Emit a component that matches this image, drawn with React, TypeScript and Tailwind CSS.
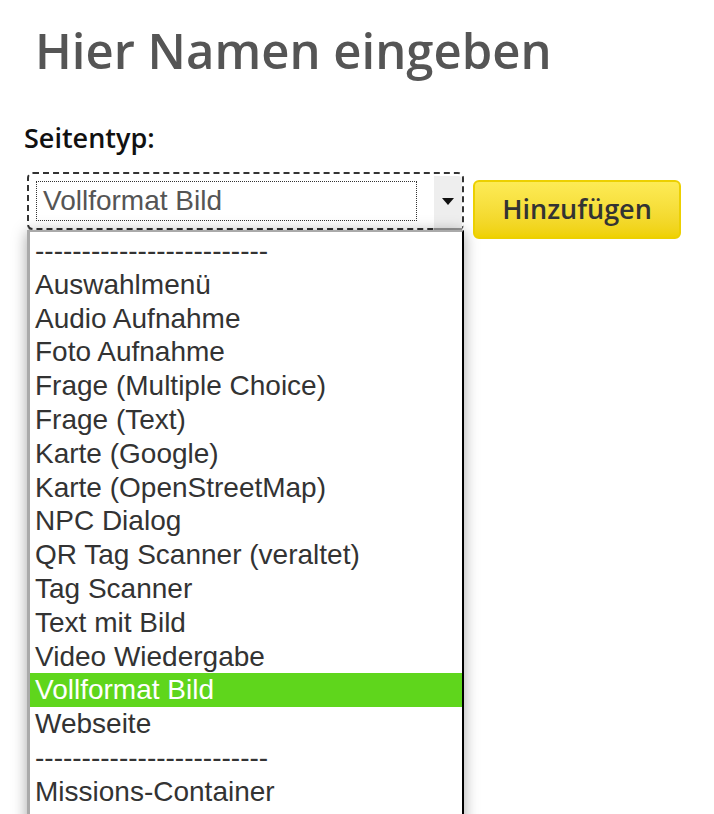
import React from 'react';

const options = [
  '-------------------------',
  'Auswahlmenü',
  'Audio Aufnahme',
  'Foto Aufnahme',
  'Frage (Multiple Choice)',
  'Frage (Text)',
  'Karte (Google)',
  'Karte (OpenStreetMap)',
  'NPC Dialog',
  'QR Tag Scanner (veraltet)',
  'Tag Scanner',
  'Text mit Bild',
  'Video Wiedergabe',
  'Vollformat Bild',
  'Webseite',
  '-------------------------',
  'Missions-Container',
];

const selected = 'Vollformat Bild';

export default function App() {
  return (
    <div className="h-[814px] w-[714px] overflow-hidden bg-white pl-[24px]">
      <h1 className="ml-[11px] pt-[26px] text-[49px] font-semibold leading-none text-[#555555] [font-family:'Open_Sans',sans-serif]">
        Hier Namen eingeben
      </h1>

      <div className="mt-[49px] text-[27px] font-semibold leading-none text-[#111111] [font-family:'Open_Sans',sans-serif]">
        Seitentyp:
      </div>

      <div className="mt-[21px] flex items-start">
        {/* Select box + open list */}
        <div className="ml-[3px] flex w-[437px] flex-col">
          <div className="flex h-[58px] rounded-[6px] border-2 border-dashed border-[#333333] bg-white p-[7px] pr-0 shadow-[0_1px_0_#999]">
            <div className="flex h-[40px] w-[381px] items-center border border-dotted border-[#333333] pl-[6px] text-[28px] leading-none text-[#555555] [font-family:'Liberation_Sans',Arial,sans-serif]">
              Vollformat Bild
            </div>
            <div className="-mt-[5px] ml-auto flex h-[54px] w-[28px] items-center justify-center rounded-tr-[4px] border-b-2 border-[#999999] bg-[#eeeeee]">
              <svg width="12" height="8" viewBox="0 0 12 8">
                <path d="M0 0 H12 L6 7 Z" fill="#111" />
              </svg>
            </div>
          </div>

          <ul className="h-[600px] border-t-2 border-r-2 border-l-[3px] border-t-[#aaaaaa] border-r-black border-l-[#aaaaaa] bg-white pt-[2px] shadow-[0_2px_14px_rgba(0,0,0,0.35)] [font-family:'Liberation_Sans',Arial,sans-serif]">
            {options.map((opt, i) => (
              <li
                key={i}
                className={
                  opt === selected
                    ? 'h-[33.8px] bg-[#5fd61c] pl-[5px] text-[28px] leading-[33.8px] text-white'
                    : 'h-[33.8px] pl-[5px] text-[28px] leading-[33.8px] text-[#333333]'
                }
              >
                {opt}
              </li>
            ))}
          </ul>
        </div>

        <button className="mt-[8px] ml-[9px] h-[59px] w-[208px] rounded-[6px] border-2 border-[#ecd000] bg-gradient-to-b from-[#fdeb55] to-[#efd100] text-[27px] font-semibold text-[#333333] [font-family:'Open_Sans',sans-serif]">
          Hinzufügen
        </button>
      </div>
    </div>
  );
}
